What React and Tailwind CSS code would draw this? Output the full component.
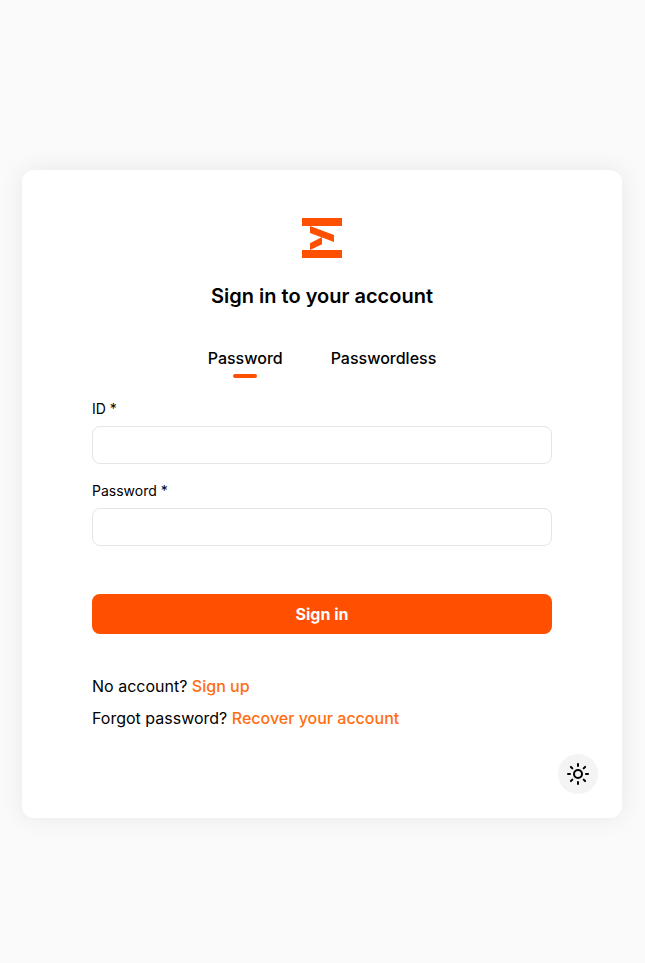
function Logo() {
  return (
    <svg width="40" height="40" viewBox="0 0 40 40" fill="#ff4f00">
      <path d="M0 0H40V8H0Z" />
      <path d="M0 32H40V40H0Z" />
      <path d="M8 8L32 17V24L8 15Z" />
      <path d="M20 19V26.300L8 32V25.200Z" />
    </svg>
  );
}

function Sun() {
  return (
    <svg width="24" height="24" viewBox="0 0 24 24" fill="none" stroke="#000" strokeWidth="2" strokeLinecap="round" strokeLinejoin="round">
      <circle cx="12" cy="12" r="4" />
      <path d="M12 2v2M12 20v2M4.930 4.930l1.410 1.410M17.660 17.660l1.410 1.410M2 12h2M20 12h2M6.340 17.660l-1.410 1.410M19.070 4.930l-1.410 1.410" />
    </svg>
  );
}

function Field({ label, type }) {
  return (
    <label className="block">
      <span className="block text-sm leading-5">{label}</span>
      <input type={type} className="mt-[7px] block h-[38px] w-full rounded-lg border border-[#e5e5e8] bg-white px-3 outline-none" />
    </label>
  );
}

export default function App() {
  return (
    <main className="h-[963px] w-full bg-[#fafafa] pt-[170px] pl-[22px] font-['Inter',sans-serif] text-base text-black">
      <section className="flex h-[648px] w-[600px] flex-col rounded-xl bg-white px-[70px] pt-12 pb-6 shadow-[0_0_24px_rgba(0,0,0,0.08)]">
        <div className="flex justify-center"><Logo /></div>
        <h1 className="mt-6 text-center text-xl leading-7 font-semibold">Sign in to your account</h1>
        <nav className="mt-9 flex h-[32px] justify-center gap-12 font-medium">
          <button className="flex flex-col items-center leading-6">
            Password
            <span className="mt-1 h-1 w-6 rounded-full bg-[#ff4f00]" />
          </button>
          <button className="flex flex-col items-center leading-6">Passwordless</button>
        </nav>
        <div className="mt-[21px] flex flex-col gap-[17px]">
          <Field label="ID *" type="text" />
          <Field label="Password *" type="password" />
        </div>
        <button className="mt-12 h-10 shrink-0 rounded-lg bg-[#ff4f00] font-bold text-white">Sign in</button>
        <div className="mt-10 flex flex-col gap-2 leading-6">
          <p>No account? <a className="font-medium text-[#ff6e10]">Sign up</a></p>
          <p>Forgot password? <a className="font-medium text-[#ff6e10]">Recover your account</a></p>
        </div>
        <button className="mt-auto -mr-[46px] flex size-10 items-center justify-center self-end rounded-full bg-[#f4f4f4]"><Sun /></button>
      </section>
    </main>
  );
}
